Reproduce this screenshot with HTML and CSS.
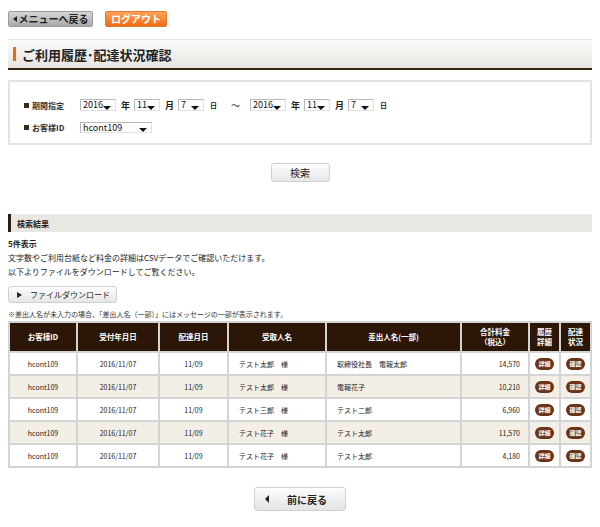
FILE: index.html
```html
<!DOCTYPE html>
<html lang="ja">
<head>
  <meta charset="UTF-8">
  <title>ご利用履歴・配達状況確認</title>
  <link rel="stylesheet" href="styles.css">
</head>
<body>
  <div class="page">
    <div class="top-nav">
      <a class="btn-menu" href="#"><span class="tri-left"></span>メニューへ戻る</a>
      <a class="btn-logout" href="#">ログアウト</a>
    </div>

    <h1 class="page-title">ご利用履歴･配達状況確認</h1>

    <div class="search-box">
      <div class="form-row">
        <div class="form-label"><span class="bullet"></span>期間指定</div>
        <div class="sel sel-year">2016</div><span class="unit">年</span>
        <div class="sel sel-num">11</div><span class="unit">月</span>
        <div class="sel sel-num">7</div><span class="unit unit-day">日</span>
        <span class="tilde">～</span>
        <div class="sel sel-year">2016</div><span class="unit">年</span>
        <div class="sel sel-num">11</div><span class="unit">月</span>
        <div class="sel sel-num">7</div><span class="unit unit-day">日</span>
      </div>
      <div class="form-row">
        <div class="form-label"><span class="bullet"></span>お客様ID</div>
        <div class="sel sel-id">hcont109</div>
      </div>
    </div>

    <div class="search-action">
      <button class="btn-search">検索</button>
    </div>

    <h2 class="section-title">検索結果</h2>

    <div class="result-text">
      <p class="count">5件表示</p>
      <p>文字数やご利用台紙など料金の詳細はCSVデータでご確認いただけます。</p>
      <p>以下よりファイルをダウンロードしてご覧ください。</p>
    </div>

    <button class="btn-download"><span class="tri-right"></span>ファイルダウンロード</button>

    <p class="note">※差出人名が未入力の場合、「差出人名（一部）」にはメッセージの一部が表示されます。</p>

    <table class="history">
      <thead>
        <tr>
          <th class="c-id">お客様ID</th>
          <th class="c-date">受付年月日</th>
          <th class="c-deliv">配達月日</th>
          <th class="c-to">受取人名</th>
          <th class="c-from">差出人名(一部)</th>
          <th class="c-price">合計料金<br>（税込）</th>
          <th class="c-btn">履歴<br>詳細</th>
          <th class="c-btn">配達<br>状況</th>
        </tr>
      </thead>
      <tbody>
        <tr>
          <td>hcont109</td><td>2016/11/07</td><td>11/09</td>
          <td class="left">テスト太郎　様</td><td class="left">取締役社長　電報太郎</td>
          <td class="right">14,570</td>
          <td><span class="pill">詳細</span></td><td><span class="pill">確認</span></td>
        </tr>
        <tr class="alt">
          <td>hcont109</td><td>2016/11/07</td><td>11/09</td>
          <td class="left">テスト太郎　様</td><td class="left">電報花子</td>
          <td class="right">10,210</td>
          <td><span class="pill">詳細</span></td><td><span class="pill">確認</span></td>
        </tr>
        <tr>
          <td>hcont109</td><td>2016/11/07</td><td>11/09</td>
          <td class="left">テスト三郎　様</td><td class="left">テスト二郎</td>
          <td class="right">6,960</td>
          <td><span class="pill">詳細</span></td><td><span class="pill">確認</span></td>
        </tr>
        <tr class="alt">
          <td>hcont109</td><td>2016/11/07</td><td>11/09</td>
          <td class="left">テスト花子　様</td><td class="left">テスト太郎</td>
          <td class="right">11,570</td>
          <td><span class="pill">詳細</span></td><td><span class="pill">確認</span></td>
        </tr>
        <tr>
          <td>hcont109</td><td>2016/11/07</td><td>11/09</td>
          <td class="left">テスト花子　様</td><td class="left">テスト太郎</td>
          <td class="right">4,180</td>
          <td><span class="pill">詳細</span></td><td><span class="pill">確認</span></td>
        </tr>
      </tbody>
    </table>

    <div class="back-action">
      <button class="btn-back"><span class="tri-left tri-big"></span>前に戻る</button>
    </div>
  </div>
</body>
</html>
```

FILE: styles.css
```css
body {
  margin: 0;
  background: #fff;
  color: #222;
  font-family: "Noto Sans CJK JP", "Liberation Sans", sans-serif;
}

p {
  margin: 0;
}

.page {
  width: 584px;
  padding: 11px 8px 0;
}

/* top navigation */
.top-nav {
  display: flex;
  gap: 12px;
  height: 16px;
}

.btn-menu,
.btn-logout {
  display: flex;
  align-items: center;
  justify-content: center;
  height: 16px;
  box-sizing: border-box;
  border-radius: 2px;
  font-size: 10px;
  font-weight: bold;
  text-decoration: none;
  line-height: 1;
}

.btn-menu {
  width: 85px;
  background: linear-gradient(#d6d6d6, #a9a9a9);
  border: 1px solid #9a9a9a;
  color: #222;
  gap: 2px;
}

.btn-logout {
  width: 62px;
  background: linear-gradient(#ffa45a, #f06a10);
  border: 1px solid #e0782e;
  color: #fff;
}

.tri-left {
  width: 0;
  height: 0;
  border-top: 3px solid transparent;
  border-bottom: 3px solid transparent;
  border-right: 4px solid #222;
}

.tri-right {
  width: 0;
  height: 0;
  border-top: 3px solid transparent;
  border-bottom: 3px solid transparent;
  border-left: 5px solid #222;
}

/* page title */
.page-title {
  margin: 12px 0 0;
  height: 31px;
  box-sizing: border-box;
  display: flex;
  align-items: center;
  padding-left: 14px;
  font-size: 13px;
  font-weight: bold;
  color: #222;
  background: linear-gradient(#fbfbfa, #e7e5e0);
  border-top: 1px solid #e4e4e4;
  border-bottom: 2px solid #3a2210;
}

.page-title::before {
  content: "";
  width: 3px;
  height: 14px;
  background: #f06a10;
  margin-left: -9px;
  margin-right: 6px;
}

/* search form */
.search-box {
  margin-top: 10px;
  height: 65px;
  box-sizing: border-box;
  border: 2px solid #e2e2e2;
  padding: 17px 0 0 14px;
  display: flex;
  flex-direction: column;
  gap: 10px;
}

.form-row {
  display: flex;
  align-items: center;
  height: 12px;
}

.form-label {
  display: flex;
  align-items: center;
  width: 56px;
  font-size: 8px;
  font-weight: bold;
  color: #333;
}

.bullet {
  width: 5px;
  height: 5px;
  background: #3a2a1a;
  margin-right: 3px;
}

.sel {
  position: relative;
  height: 12px;
  box-sizing: border-box;
  border: 1px solid #b9b9b9;
  border-right-color: #e0e0e0;
  border-bottom-color: #e0e0e0;
  font-size: 9px;
  line-height: 10px;
  padding-left: 2px;
  color: #111;
  background: #fff;
}

.sel::after {
  content: "";
  position: absolute;
  right: 4px;
  bottom: 0;
  width: 0;
  height: 0;
  border-left: 4px solid transparent;
  border-right: 4px solid transparent;
  border-top: 4px solid #111;
}

.sel-year {
  width: 36px;
}

.sel-num {
  width: 26px;
}

.sel-id {
  width: 72px;
  height: 11px;
}

.unit {
  font-size: 9px;
  font-weight: bold;
  margin: 0 4px 0 5px;
  color: #222;
}

.unit-day {
  font-size: 7px;
  margin: 0 0 0 6px;
}

.tilde {
  font-size: 9px;
  margin: 0 10px 0 14px;
}

.search-action {
  margin-top: 18px;
  display: flex;
  justify-content: center;
}

.btn-search {
  width: 59px;
  height: 19px;
  border: 1px solid #cfcfcf;
  border-radius: 3px;
  background: linear-gradient(#fdfdfd, #e8e8e8);
  font-family: inherit;
  font-size: 10px;
  color: #222;
  padding: 0;
}

/* results */
.section-title {
  margin: 32px 0 0;
  height: 18px;
  box-sizing: border-box;
  background: #e9e7e2;
  border-left: 3px solid #2b1a0e;
  padding-left: 6px;
  font-size: 8px;
  font-weight: bold;
  display: flex;
  align-items: center;
  color: #222;
}

.result-text {
  margin-top: 5px;
  font-size: 8px;
  line-height: 14px;
  color: #222;
}

.count {
  font-weight: bold;
}

.btn-download {
  margin-top: 7px;
  width: 109px;
  height: 17px;
  border: 1px solid #cfcfcf;
  border-radius: 3px;
  background: linear-gradient(#fdfdfd, #e6e6e6);
  font-family: inherit;
  font-size: 8px;
  white-space: nowrap;
  color: #222;
  display: flex;
  align-items: center;
  gap: 8px;
  padding: 0 0 0 8px;
}

.note {
  margin-top: 6px;
  font-size: 7px;
  line-height: 10px;
  color: #333;
}

.history {
  width: 584px;
  margin-top: 2px;
  border-collapse: collapse;
  table-layout: fixed;
  font-size: 7px;
  color: #222;
}

.history th,
.history td {
  border: 2px solid #d4d4d4;
  text-align: center;
  padding: 0;
}

.history th {
  background: #2b1608;
  color: #fff;
  font-weight: bold;
  font-size: 7.5px;
  height: 28px;
  line-height: 10px;
}

.history td {
  height: 21px;
}

.history tr.alt td {
  background: #f3eee6;
}

.history td.left {
  text-align: left;
  padding-left: 10px;
}

.history td.right {
  text-align: right;
  padding-right: 8px;
}

.c-id { width: 66px; }
.c-date { width: 80px; }
.c-deliv { width: 67px; }
.c-to { width: 96px; }
.c-from { width: 133px; }
.c-price { width: 66px; }
.c-btn { width: 29px; }

.pill {
  display: inline-block;
  width: 19px;
  height: 12px;
  line-height: 12px;
  border-radius: 6px;
  background: #6a3318;
  color: #fff;
  font-size: 6px;
  font-weight: bold;
}

.back-action {
  margin-top: 19px;
  display: flex;
  justify-content: center;
}

.btn-back {
  width: 92px;
  height: 24px;
  border: 1px solid #cfcfcf;
  border-radius: 3px;
  background: linear-gradient(#fdfdfd, #e4e4e4);
  font-family: inherit;
  font-size: 10px;
  font-weight: bold;
  color: #222;
  display: flex;
  align-items: center;
  gap: 18px;
  padding: 0 0 0 10px;
}

.tri-big {
  border-top-width: 4px;
  border-bottom-width: 4px;
  border-right-width: 4px;
}
```
